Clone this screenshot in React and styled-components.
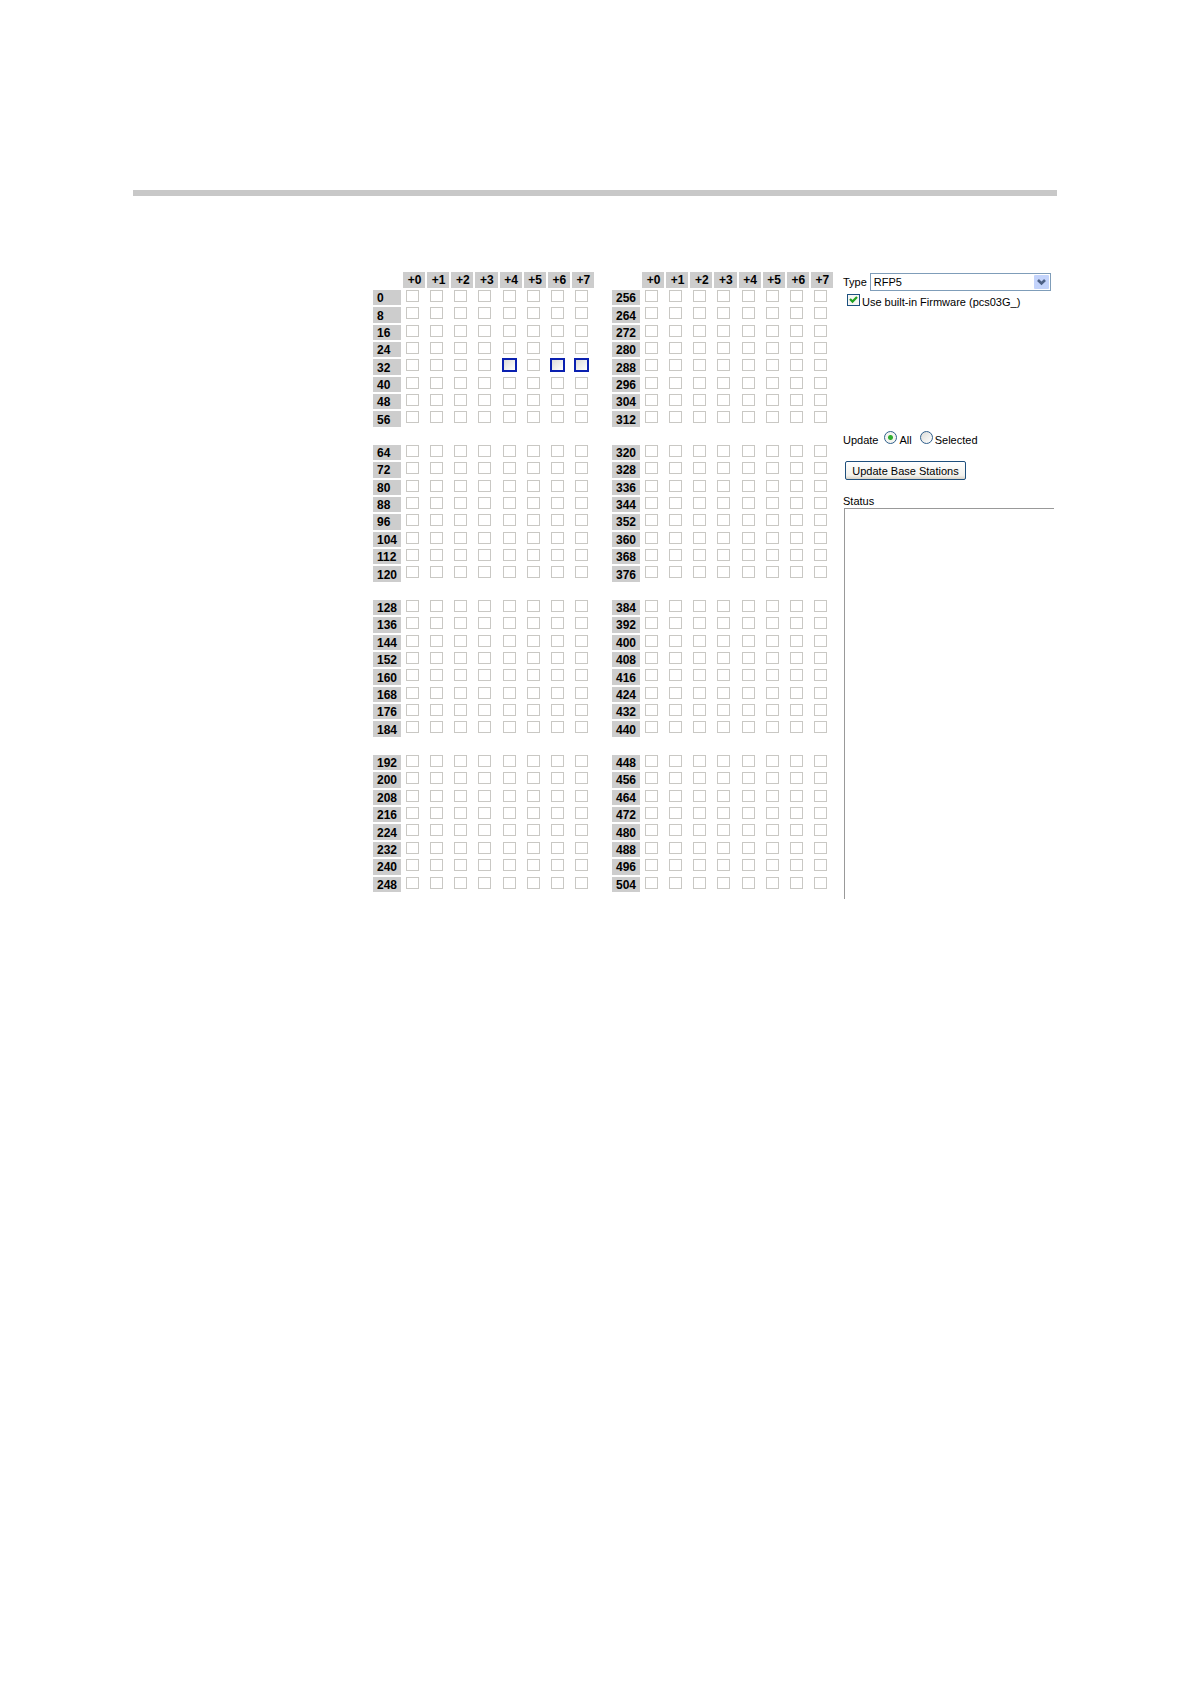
import React from 'react';
import styled, { createGlobalStyle, css } from 'styled-components';

const GlobalStyle = createGlobalStyle`
  * { box-sizing: border-box; }

  body {
    margin: 0;
    background: #fff;
    color: #000;
    font-family: 'Liberation Sans', Arial, sans-serif;
    font-size: 11px;
  }
`;

const Page = styled.main`
  min-height: 100vh;
  padding: 190px 134px 40px 133px;
`;

const Rule = styled.hr`
  height: 6px;
  margin: 0 0 74px;
  border: none;
  background: #c8c8c8;
`;

const Content = styled.div`
  display: flex;
  align-items: flex-start;
  padding: 0 3px 0 238px;
`;

const StationTable = styled.table`
  flex: none;
  width: 225px;
  height: 624px;
  margin-right: ${props => (props.$last ? '8px' : '14px')};
  table-layout: fixed;
  border-collapse: separate;
  border-spacing: 2px;
  font-size: 12px;
  font-weight: bold;
  line-height: 15px;
`;

const CornerCell = styled.td`
  width: 28px;
  height: 16px;
  padding: 0;
`;

const ColumnHeader = styled.th`
  height: 16px;
  padding: 1px 0 0 1px;
  background: #cdcdcd;
  text-align: center;
`;

const RowHeader = styled.th`
  padding: 2px 0 0 4px;
  background: #cdcdcd;
  line-height: 13px;
  text-align: left;
`;

const SpacerRow = styled.tr`
  height: 14px;

  td {
    height: 14px;
    padding: 0;
  }
`;

const StationCell = styled.td`
  padding: 0 0 0 3px;
  vertical-align: top;
`;

const StationCheck = styled.input`
  appearance: none;
  display: block;
  width: 13px;
  height: 12px;
  margin: 0;
  border: 1px solid #c9c8c4;
  background: #fff;

  /* connected base stations */
  ${props => props.$present && css`
    border-color: #0a20b0;
    outline: 1px solid #0a20b0;
    background: linear-gradient(135deg, #dcdcd8, #fff);
  `}
`;

const Panel = styled.form`
  flex: 1;
  min-width: 0;
  padding-top: 3px;
`;

const TypeRow = styled.div`
  display: flex;
  align-items: center;
  justify-content: space-between;
  padding-right: 3px;
  line-height: 14px;
`;

const SelectBox = styled.div`
  position: relative;
  flex: 1;
  margin-left: 3px;
`;

const Select = styled.select`
  appearance: none;
  display: block;
  width: 100%;
  height: 18px;
  padding: 0 18px 0 3px;
  border: 1px solid #7f9db9;
  border-radius: 0;
  background: #fff;
  color: #000;
  font: inherit;
`;

const SelectArrow = styled.svg`
  position: absolute;
  top: 2px;
  right: 2px;
  pointer-events: none;
`;

const OptionRow = styled.div`
  display: flex;
  align-items: flex-start;
  line-height: ${props => props.$line};
  margin-top: ${props => props.$top};
  padding-left: ${props => props.$indent || '0'};
`;

const OptionLabel = styled.label`
  display: flex;
  align-items: flex-start;
  gap: 2px;
  margin-left: ${props => props.$left || '0'};
`;

const Check = styled.input`
  appearance: none;
  flex: none;
  width: 13px;
  height: 12px;
  margin: 0;
  border: 1px solid #1c5180;
  background: #f6f6f3;

  &:checked {
    background: #f6f6f3 url("data:image/svg+xml,%3Csvg xmlns='http://www.w3.org/2000/svg' viewBox='0 0 11 10'%3E%3Cpath d='M2 4l2.5 2.6L9 2' fill='none' stroke='%2321a121' stroke-width='2.2'/%3E%3C/svg%3E") center / 11px 10px no-repeat;
  }
`;

const Radio = styled.input`
  appearance: none;
  flex: none;
  width: 13px;
  height: 13px;
  margin: 0;
  border: 1px solid #2f5f8c;
  border-radius: 50%;
  background: linear-gradient(135deg, #dcdcd8, #fff);

  &:checked {
    background: radial-gradient(circle, #2fae2f 0 2px, #f4f4f0 3px);
  }
`;

const UpdateButton = styled.button`
  display: block;
  width: 121px;
  height: 19px;
  margin: 12px 0 14px 2px;
  padding: 0;
  border: 1px solid #1f4f7c;
  border-radius: 2px;
  background: linear-gradient(#fff, #f2f1ec 80%, #d8d2c6);
  color: #000;
  font: inherit;
`;

const StatusLabel = styled.label`
  display: block;
  line-height: 14px;
`;

const StatusBox = styled.textarea`
  display: block;
  width: calc(100% - 1px);
  height: 391px;
  margin-left: 1px;
  border: solid #999;
  border-width: 1px 0 0 1px;
  background: #fff;
  font: inherit;
  resize: none;
  outline: none;
`;

const COLUMNS = [0, 1, 2, 3, 4, 5, 6, 7];
const GROUPS = [0, 1, 2, 3];
const PRESENT = [36, 38, 39];

function Stations({ start, last }) {
  return (
    <StationTable $last={last}>
      <thead>
        <tr>
          <CornerCell />
          {COLUMNS.map(col => (
            <ColumnHeader key={col} scope="col">+{col}</ColumnHeader>
          ))}
        </tr>
      </thead>
      {GROUPS.map(group => (
        <tbody key={group}>
          {group > 0 && <SpacerRow><td colSpan={9} /></SpacerRow>}
          {COLUMNS.map(row => {
            const base = start + group * 64 + row * 8;
            return (
              <tr key={base}>
                <RowHeader scope="row">{base}</RowHeader>
                {COLUMNS.map(col => (
                  <StationCell key={col}>
                    <StationCheck
                      type="checkbox"
                      aria-label={`Base station ${base + col}`}
                      disabled={!PRESENT.includes(base + col)}
                      $present={PRESENT.includes(base + col)}
                    />
                  </StationCell>
                ))}
              </tr>
            );
          })}
        </tbody>
      ))}
    </StationTable>
  );
}

export default function App() {
  return (
    <>
      <GlobalStyle />
      <Page>
        <Rule />
        <Content>
          <Stations start={0} />
          <Stations start={256} last />
          <Panel onSubmit={e => e.preventDefault()}>
            <TypeRow>
              <label htmlFor="type">Type</label>
              <SelectBox>
                <Select id="type" defaultValue="RFP5">
                  <option value="RFP5">RFP5</option>
                </Select>
                <SelectArrow width="15" height="14" viewBox="0 0 15 14" aria-hidden="true">
                  <rect width="15" height="14" rx="1" fill="#c3d3fb" />
                  <path d="M4 5l3.5 3.5L11 5" fill="none" stroke="#4d6185" strokeWidth="2.6" />
                </SelectArrow>
              </SelectBox>
            </TypeRow>
            <OptionRow $top="3px" $line="16px" $indent="4px">
              <OptionLabel>
                <Check type="checkbox" defaultChecked />
                Use built-in Firmware (pcs03G_)
              </OptionLabel>
            </OptionRow>
            <OptionRow $top="121px" $line="18px">
              <span>Update</span>
              <OptionLabel $left="6px">
                <Radio type="radio" name="scope" defaultChecked />
                All
              </OptionLabel>
              <OptionLabel $left="8px">
                <Radio type="radio" name="scope" />
                Selected
              </OptionLabel>
            </OptionRow>
            <UpdateButton type="submit">Update Base Stations</UpdateButton>
            <StatusLabel htmlFor="status">Status</StatusLabel>
            <StatusBox id="status" readOnly />
          </Panel>
        </Content>
      </Page>
    </>
  );
}
